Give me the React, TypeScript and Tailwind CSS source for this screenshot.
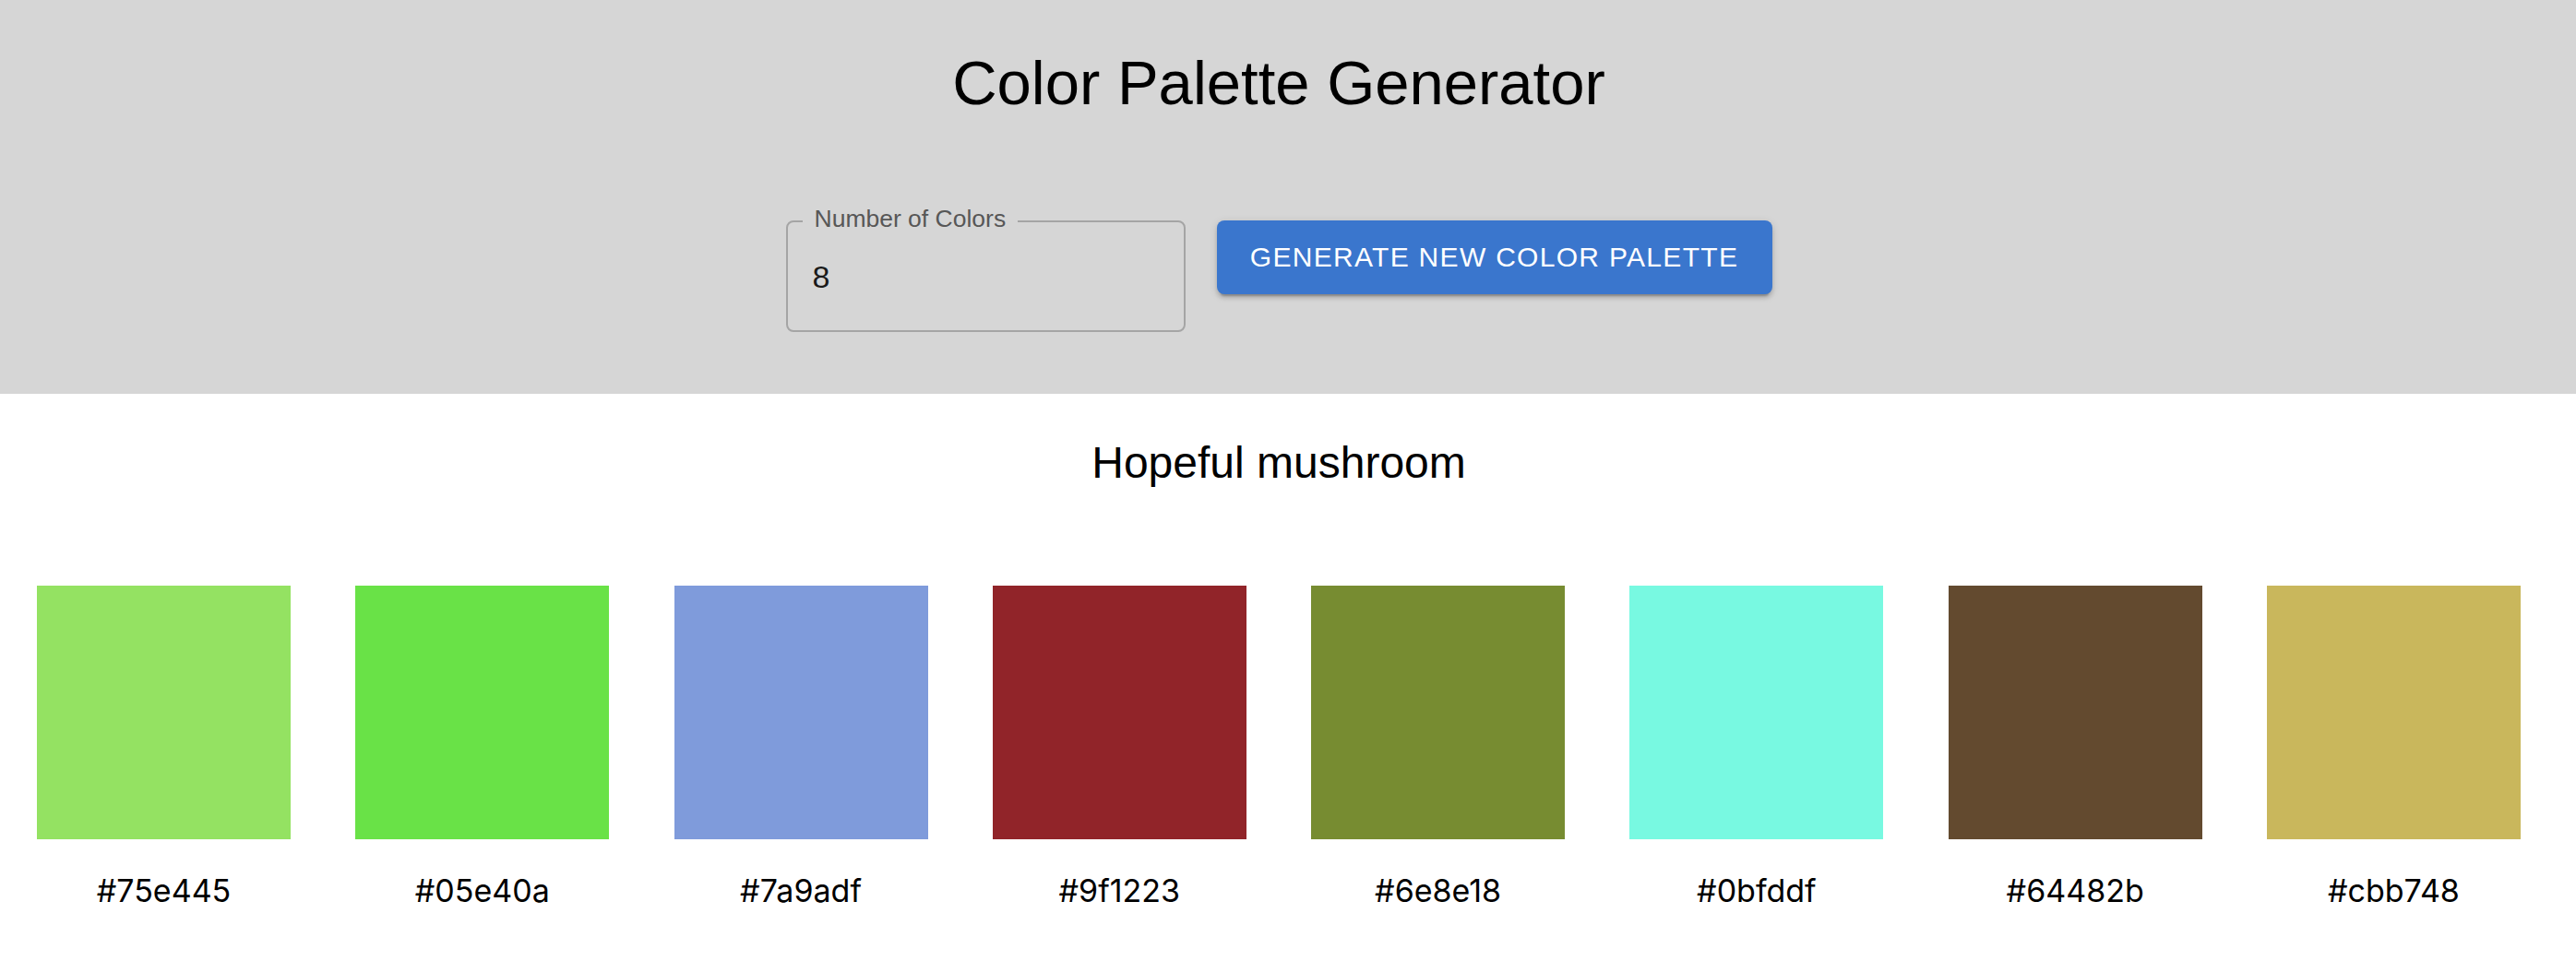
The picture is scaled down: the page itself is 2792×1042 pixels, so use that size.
import React from "react";

const swatches = [
  { hex: "#75e445", shown: "#94e262" },
  { hex: "#05e40a", shown: "#69e247" },
  { hex: "#7a9adf", shown: "#7f9bdb" },
  { hex: "#9f1223", shown: "#912429" },
  { hex: "#6e8e18", shown: "#778c31" },
  { hex: "#0bfddf", shown: "#78f9e1" },
  { hex: "#64482b", shown: "#634a2f" },
  { hex: "#cbb748", shown: "#c9b75c" },
];

export default function App() {
  return (
    <div className="min-h-screen w-full bg-white text-black">
      <header className="h-[427px] bg-[#d6d6d6] pr-[20px] pt-[48px] font-['Liberation_Sans',Arial,sans-serif]">
        <h1 className="text-center text-[67px] font-normal leading-[84px] text-black">
          Color Palette Generator
        </h1>
        <div className="mt-[107px] flex items-start justify-center gap-[34px]">
          <div className="relative flex h-[121px] w-[433px] items-center rounded-[8px] border-2 border-[#a5a5a5] pl-[27px]">
            <span className="absolute left-[16px] top-[-20px] bg-[#d6d6d6] px-[13px] text-[26.5px] leading-[32px] text-[#575757]">
              Number of Colors
            </span>
            <span className="text-[34px] leading-[40px] text-[#1a1a1a]">8</span>
          </div>
          <button className="flex h-[80px] w-[602px] items-center justify-center rounded-[8px] bg-[#3a76cd] text-[30px] font-normal uppercase leading-[40px] tracking-[1.3px] text-white shadow-[0_6px_2px_-4px_rgba(0,0,0,0.2),0_4px_4px_0_rgba(0,0,0,0.14),0_2px_10px_0_rgba(0,0,0,0.12)]">
            Generate New Color Palette
          </button>
        </div>
      </header>
      <main className="pr-[20px]">
        <h2 className="mt-[43px] text-center font-['Liberation_Sans',Arial,sans-serif] text-[48px] font-normal leading-[64px] text-black">
          Hopeful mushroom
        </h2>
        <div className="mt-[101px] flex justify-between px-[40px]">
          {swatches.map((s) => (
            <div key={s.hex} className="flex flex-col items-center">
              <div className="h-[275px] w-[275px]" style={{ backgroundColor: s.shown }} />
              <div className="mt-[36px] font-['Inter',sans-serif] text-[34px] leading-[40px] text-black">
                {s.hex}
              </div>
            </div>
          ))}
        </div>
      </main>
    </div>
  );
}
